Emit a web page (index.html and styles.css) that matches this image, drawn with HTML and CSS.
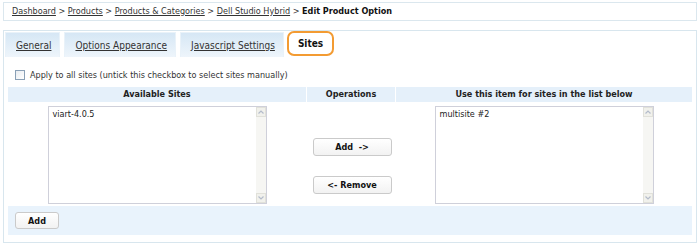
FILE: index.html
```html
<!DOCTYPE html>
<html>
<head>
<meta charset="utf-8">
<title>Edit Product Option</title>
<link rel="stylesheet" href="styles.css">
</head>
<body>
<div class="page">
  <div class="crumbs">
    <a href="#">Dashboard</a> &gt; <a href="#">Products</a> &gt; <a href="#">Products &amp; Categories</a> &gt; <a href="#">Dell Studio Hybrid</a> &gt; <b>Edit Product Option</b>
  </div>
  <div class="panel">
    <div class="tabs">
      <a class="tab" href="#">General</a>
      <a class="tab" href="#">Options Appearance</a>
      <a class="tab" href="#">Javascript Settings</a>
      <span class="tab active">Sites</span>
    </div>
    <div class="content">
      <label class="apply"><span class="cb"></span>Apply to all sites (untick this checkbox to select sites manually)</label>
      <div class="grid">
        <div class="th">Available Sites</div>
        <div class="th">Operations</div>
        <div class="th">Use this item for sites in the list below</div>
        <div class="cell">
          <div class="list">
            <div class="items"><div>viart-4.0.5</div></div>
            <div class="scroll">
              <span class="arrow"><svg width="8" height="6" viewBox="0 0 8 6"><polyline points="1.5,4.5 4,2 6.5,4.5" fill="none" stroke="#b4bccb" stroke-width="1.2"/></svg></span>
              <span class="track"></span>
              <span class="arrow"><svg width="8" height="6" viewBox="0 0 8 6"><polyline points="1.5,1.5 4,4 6.5,1.5" fill="none" stroke="#b4bccb" stroke-width="1.2"/></svg></span>
            </div>
          </div>
        </div>
        <div class="cell ops">
          <button class="btn wide">Add&nbsp;&nbsp;-&gt;</button>
          <button class="btn wide">&lt;- Remove</button>
        </div>
        <div class="cell">
          <div class="list">
            <div class="items"><div>multisite #2</div></div>
            <div class="scroll">
              <span class="arrow"><svg width="8" height="6" viewBox="0 0 8 6"><polyline points="1.5,4.5 4,2 6.5,4.5" fill="none" stroke="#b4bccb" stroke-width="1.2"/></svg></span>
              <span class="track"></span>
              <span class="arrow"><svg width="8" height="6" viewBox="0 0 8 6"><polyline points="1.5,1.5 4,4 6.5,1.5" fill="none" stroke="#b4bccb" stroke-width="1.2"/></svg></span>
            </div>
          </div>
        </div>
        <div class="bar"><button class="btn small">Add</button></div>
      </div>
    </div>
  </div>
</div>
</body>
</html>
```

FILE: styles.css
```css
html, body {
  margin: 0;
  padding: 0;
  background: #ffffff;
}
body {
  font-family: "DejaVu Sans Condensed", "Liberation Sans", sans-serif;
  font-size: 9px;
  color: #222222;
}
.page {
  padding: 2px 3px 0 3px;
}
.crumbs {
  border: 1px solid #dbe7ee;
  height: 17px;
  line-height: 17px;
  padding-left: 8px;
  color: #333;
}
.crumbs a {
  color: #333;
  text-decoration: underline;
}
.crumbs b {
  color: #111;
}
.panel {
  margin-top: 9px;
  border: 1px solid #d8e6ee;
}
.tabs {
  display: flex;
  align-items: flex-start;
  gap: 4px;
  padding: 1px 0 0 1px;
  height: 26px;
}
.tab {
  display: flex;
  align-items: center;
  height: 25px;
  padding: 0 8px 0 10px;
  box-sizing: border-box;
  background: linear-gradient(#d6e7f5, #eef5fb);
  border: 1px solid #e9f2f9;
  border-bottom: none;
  color: #333;
  text-decoration: underline;
  font-size: 10px;
}
.tab.active {
  margin-top: -1px;
  margin-left: -1px;
  background: #fff;
  border: 2px solid #f39b32;
  border-radius: 7px;
  text-decoration: none;
  font-weight: bold;
  color: #111;
  padding: 0 9px;
}
.content {
  padding: 0 4px 7px 4px;
}
.apply {
  display: flex;
  align-items: center;
  height: 14px;
  margin-top: 10px;
  margin-bottom: 5px;
  color: #333;
}
.cb {
  width: 10px;
  height: 10px;
  box-sizing: border-box;
  border: 1px solid #8aa0b6;
  background: linear-gradient(135deg, #e8ecf0, #ffffff);
  margin: 0 5px 0 7px;
}
.grid {
  display: grid;
  grid-template-columns: 298px 88px 296px;
  grid-template-rows: 15px 102px 29px;
  gap: 1px;
}
.th {
  background: #e5f0fa;
  font-weight: bold;
  text-align: center;
  line-height: 15px;
  color: #222;
}
.cell {
  display: flex;
  justify-content: center;
  align-items: flex-start;
}
.list {
  margin-top: 3px;
  width: 219px;
  height: 98px;
  box-sizing: border-box;
  border: 1px solid #cfd0da;
  display: flex;
  background: #fff;
}
.items {
  flex: 1;
  padding: 2px 4px;
  line-height: 11px;
  color: #222;
}
.scroll {
  width: 10px;
  display: flex;
  flex-direction: column;
  background: #f6f6f3;
}
.arrow {
  height: 10px;
  box-sizing: border-box;
  border: 1px solid #e1e1da;
  background: #f1f1ec;
  display: flex;
  align-items: center;
  justify-content: center;
}
.track {
  flex: 1;
}
.ops {
  flex-direction: column;
  align-items: center;
  gap: 20px;
  padding-top: 24px;
  padding-left: 2px;
  box-sizing: border-box;
}
.btn {
  font-family: inherit;
  font-size: 9px;
  font-weight: bold;
  color: #111;
  background: linear-gradient(#ffffff, #f2f2f2);
  border: 1px solid #cacaca;
  border-radius: 3px;
  height: 18px;
  padding: 0;
  margin: 0;
  white-space: pre;
}
.btn.wide {
  width: 79px;
}
.btn.small {
  width: 44px;
  height: 17px;
}
.bar {
  grid-column: 1 / 4;
  background: #e9f3fc;
  display: flex;
  align-items: center;
  padding-left: 7px;
}
```
